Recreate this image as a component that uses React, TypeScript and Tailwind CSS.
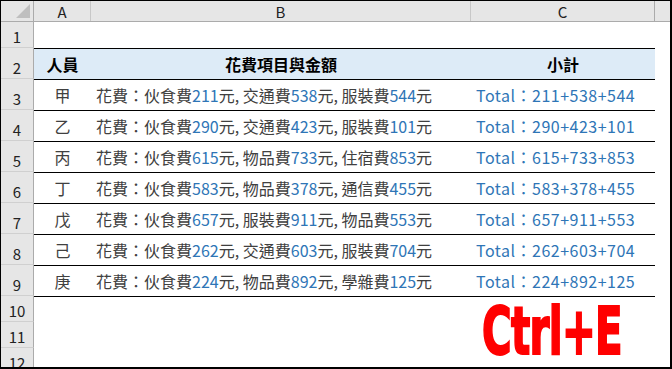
import React from 'react'

const cjk = 'font-["Noto_Sans_CJK_TC","Noto_Sans",sans-serif]'

type Item = { name: string; amount: number }
type Person = { who: string; items: Item[] }

const people: Person[] = [
  { who: '甲', items: [{ name: '伙食費', amount: 211 }, { name: '交通費', amount: 538 }, { name: '服裝費', amount: 544 }] },
  { who: '乙', items: [{ name: '伙食費', amount: 290 }, { name: '交通費', amount: 423 }, { name: '服裝費', amount: 101 }] },
  { who: '丙', items: [{ name: '伙食費', amount: 615 }, { name: '物品費', amount: 733 }, { name: '住宿費', amount: 853 }] },
  { who: '丁', items: [{ name: '伙食費', amount: 583 }, { name: '物品費', amount: 378 }, { name: '通信費', amount: 455 }] },
  { who: '戊', items: [{ name: '伙食費', amount: 657 }, { name: '服裝費', amount: 911 }, { name: '物品費', amount: 553 }] },
  { who: '己', items: [{ name: '伙食費', amount: 262 }, { name: '交通費', amount: 603 }, { name: '服裝費', amount: 704 }] },
  { who: '庚', items: [{ name: '伙食費', amount: 224 }, { name: '物品費', amount: 892 }, { name: '學雜費', amount: 125 }] },
]

const cols = 'grid grid-cols-[33px_57px_380px_184px_1fr]'

function RowHead({ n }: { n: number }) {
  return (
    <div className="flex items-end justify-center pb-[3px] bg-[#e6e6e6] border-r border-b border-r-[#ababab] border-b-[#d0d0d0] text-[15px] leading-none text-[#222]">
      {n}
    </div>
  )
}

function Row({
  n,
  tall,
  line,
  a,
  b,
  c,
  fill,
}: {
  n: number
  tall?: boolean
  line?: boolean
  a?: React.ReactNode
  b?: React.ReactNode
  c?: React.ReactNode
  fill?: boolean
}) {
  const cell = `flex items-center ${line ? 'border-t border-black' : ''} ${fill ? 'bg-[#ddebf7]' : ''}`
  return (
    <div className={`${cols} ${tall ? 'h-[31px]' : 'h-[26px]'}`}>
      <RowHead n={n} />
      <div className={`${cell} justify-center`}>{a}</div>
      <div className={`${cell} pl-[5px]`}>{b}</div>
      <div className={`${cell} pl-[5px]`}>{c}</div>
      <div />
    </div>
  )
}

export default function App() {
  return (
    <div className={`relative w-[672px] h-[369px] overflow-hidden bg-white border-l border-t border-r-2 border-b-2 border-black ${cjk}`}>
      {/* column letters */}
      <div className={`${cols} h-[21px] bg-[#e6e6e6] border-b border-[#ababab] text-[15px] leading-none text-[#222]`}>
        <div className="relative border-r border-[#ababab]">
          <svg className="absolute right-[3px] bottom-[3px]" width="14" height="14">
            <polygon points="14,0 14,14 0,14" fill="#bfbfbf" />
          </svg>
        </div>
        <div className="flex items-center justify-center border-r border-[#c8c8c8]">A</div>
        <div className="flex items-center justify-center border-r border-[#c8c8c8]">B</div>
        <div className="flex items-center justify-center border-r border-[#ababab]">C</div>
        <div />
      </div>

      <Row n={1} />
      <Row
        n={2}
        tall
        line
        fill
        a={<span className="text-[16px] font-bold text-black">人員</span>}
        b={<span className="w-full text-center text-[16px] font-bold text-black pr-[5px]">花費項目與金額</span>}
        c={<span className="w-full text-center text-[16px] font-bold text-black pr-[5px]">小計</span>}
      />
      {people.map((p, i) => (
        <Row
          key={p.who}
          n={i + 3}
          tall
          line
          a={<span className="text-[16px] text-[#404040]">{p.who}</span>}
          b={
            <span className="text-[16px] text-[#404040] whitespace-nowrap">
              花費：
              {p.items.map((it, j) => (
                <React.Fragment key={j}>
                  {j > 0 && ', '}
                  {it.name}
                  <span className="text-[#2e75b6]">{it.amount}</span>元
                </React.Fragment>
              ))}
            </span>
          }
          c={
            <span className="text-[16px] tracking-[0.5px] text-[#2e75b6] whitespace-nowrap">
              Total：{p.items.map((it) => it.amount).join('+')}
            </span>
          }
        />
      ))}
      <Row n={10} line />
      <Row n={11} />
      <Row n={12} />

      {/* big red shortcut label over the sheet */}
      <div className="absolute left-[481px] top-[296px] h-[70px] flex items-center">
        <span className='origin-left scale-x-[0.68] font-["DejaVu_Sans_Condensed",sans-serif] font-bold text-[66px] leading-none text-[#ff0000] [-webkit-text-stroke:2px_#ff0000] tracking-[-1px] whitespace-nowrap'>
          Ctrl+E
        </span>
      </div>
    </div>
  )
}
